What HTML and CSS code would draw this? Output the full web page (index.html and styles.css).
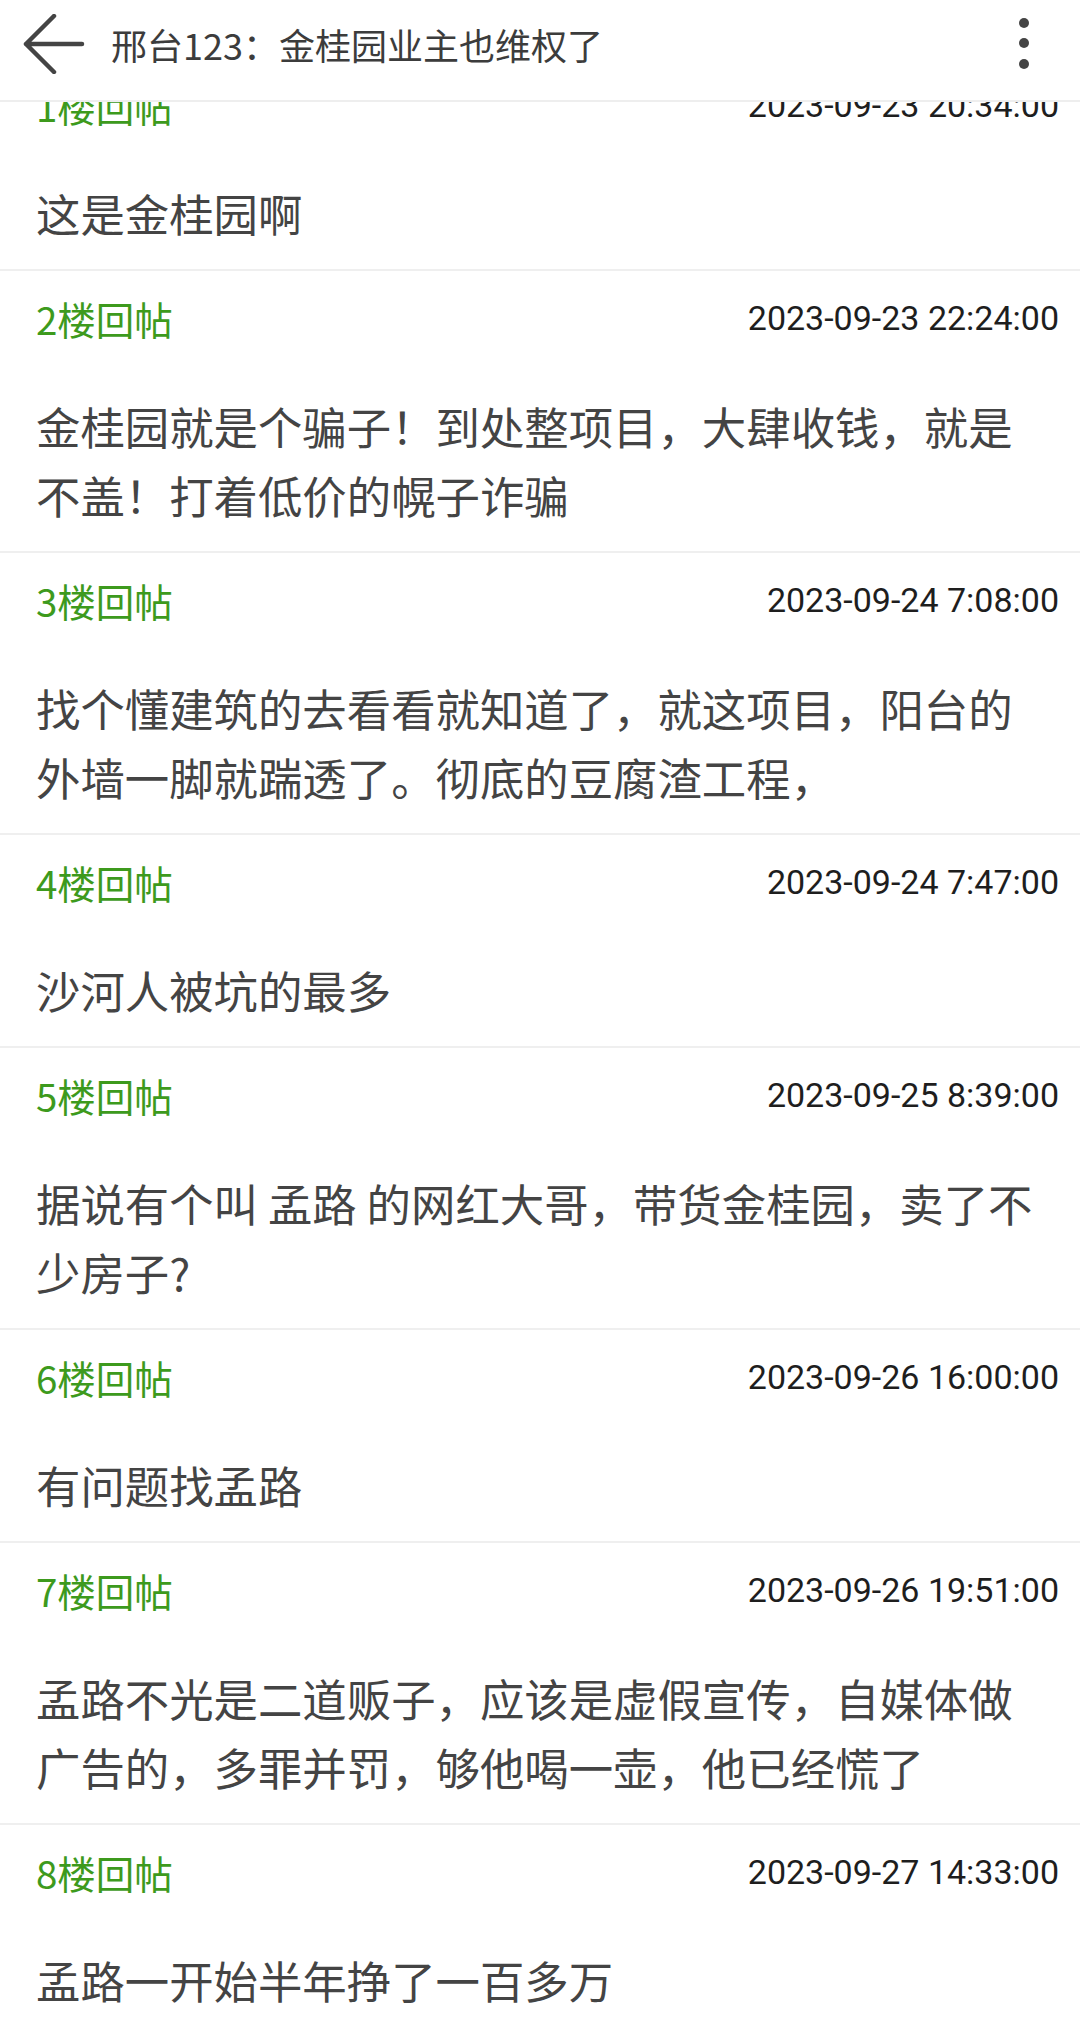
FILE: index.html
```html
<!DOCTYPE html>
<html>

	<head>
		<meta charset="utf-8">
		<meta name="viewport" content="width=device-width,initial-scale=1,minimum-scale=1,maximum-scale=1,user-scalable=no" />
		<title>邢台123：金桂园业主也维权了</title>
		<link rel="stylesheet" href="styles.css">
	</head>

	<body>
		<div class="page">
			<header class="topbar">
				<svg class="back-icon" width="62" height="60" viewBox="0 0 62 60">
					<path d="M31 2 L3 30 L31 58 M3 30 L59 30" fill="none" stroke="#444" stroke-width="4.5" stroke-linecap="round" stroke-linejoin="round" />
				</svg>
				<h1 class="topbar-title">邢台123：金桂园业主也维权了</h1>
				<svg class="more-icon" width="14" height="54" viewBox="0 0 14 54">
					<circle cx="7" cy="6" r="5" fill="#444" />
					<circle cx="7" cy="26" r="5" fill="#444" />
					<circle cx="7" cy="47" r="5" fill="#444" />
				</svg>
			</header>

			<div class="viewport">
				<ul class="reply-list">
					<li class="reply">
						<div class="reply-head"><span class="floor">1楼回帖</span><span class="dtime">2023-09-23 20:34:00</span></div>
						<p class="reply-text">这是金桂园啊</p>
					</li>
					<li class="reply">
						<div class="reply-head"><span class="floor">2楼回帖</span><span class="dtime">2023-09-23 22:24:00</span></div>
						<p class="reply-text">金桂园就是个骗子！到处整项目，大肆收钱，就是不盖！打着低价的幌子诈骗</p>
					</li>
					<li class="reply">
						<div class="reply-head"><span class="floor">3楼回帖</span><span class="dtime">2023-09-24 7:08:00</span></div>
						<p class="reply-text">找个懂建筑的去看看就知道了，就这项目，阳台的外墙一脚就踹透了。彻底的豆腐渣工程，</p>
					</li>
					<li class="reply">
						<div class="reply-head"><span class="floor">4楼回帖</span><span class="dtime">2023-09-24 7:47:00</span></div>
						<p class="reply-text">沙河人被坑的最多</p>
					</li>
					<li class="reply">
						<div class="reply-head"><span class="floor">5楼回帖</span><span class="dtime">2023-09-25 8:39:00</span></div>
						<p class="reply-text">据说有个叫 孟路 的网红大哥，带货金桂园，卖了不少房子?</p>
					</li>
					<li class="reply">
						<div class="reply-head"><span class="floor">6楼回帖</span><span class="dtime">2023-09-26 16:00:00</span></div>
						<p class="reply-text">有问题找孟路</p>
					</li>
					<li class="reply">
						<div class="reply-head"><span class="floor">7楼回帖</span><span class="dtime">2023-09-26 19:51:00</span></div>
						<p class="reply-text">孟路不光是二道贩子，应该是虚假宣传，自媒体做广告的，多罪并罚，够他喝一壶，他已经慌了</p>
					</li>
					<li class="reply">
						<div class="reply-head"><span class="floor">8楼回帖</span><span class="dtime">2023-09-27 14:33:00</span></div>
						<p class="reply-text">孟路一开始半年挣了一百多万</p>
					</li>
				</ul>
			</div>
		</div>
	</body>

</html>
```

FILE: styles.css
```css
html,
body {
	margin: 0;
	padding: 0;
	background-color: #ffffff;
	font-family: "Noto Sans CJK SC", sans-serif;
}

.page {
	display: flex;
	flex-direction: column;
	width: 1080px;
	height: 2034px;
	overflow: hidden;
}

.topbar {
	display: flex;
	align-items: center;
	flex-shrink: 0;
	height: 88px;
	padding-bottom: 12px;
	border-bottom: 2px solid #eeeeee;
	background-color: #ffffff;
}

.back-icon {
	margin-left: 23px;
	flex-shrink: 0;
}

.topbar-title {
	flex: 1;
	margin: 0 0 0 26px;
	font-size: 36px;
	font-weight: normal;
	line-height: 50px;
	color: #3c3c3c;
}

.more-icon {
	margin-right: 49px;
	flex-shrink: 0;
}

.viewport {
	flex: 1;
	overflow: hidden;
}

/* list is scrolled a little, 1楼 sits under the bar */
.reply-list {
	list-style: none;
	margin: -44px 0 0 0;
	padding: 0;
}

.reply {
	padding: 22px 21px 22px 36px;
	border-bottom: 2px solid #efefef;
}

.reply-head {
	display: flex;
	justify-content: space-between;
	align-items: center;
	height: 50px;
}

.floor {
	font-size: 38.5px;
	line-height: 50px;
	color: #3d9a1d;
}

.dtime {
	font-family: Roboto, "Noto Sans CJK SC", sans-serif;
	font-size: 34px;
	line-height: 50px;
	color: #1e1e1e;
}

.reply-text {
	margin: 48px 15px 0 0;
	font-size: 44.4px;
	line-height: 69px;
	color: #444444;
}
```
